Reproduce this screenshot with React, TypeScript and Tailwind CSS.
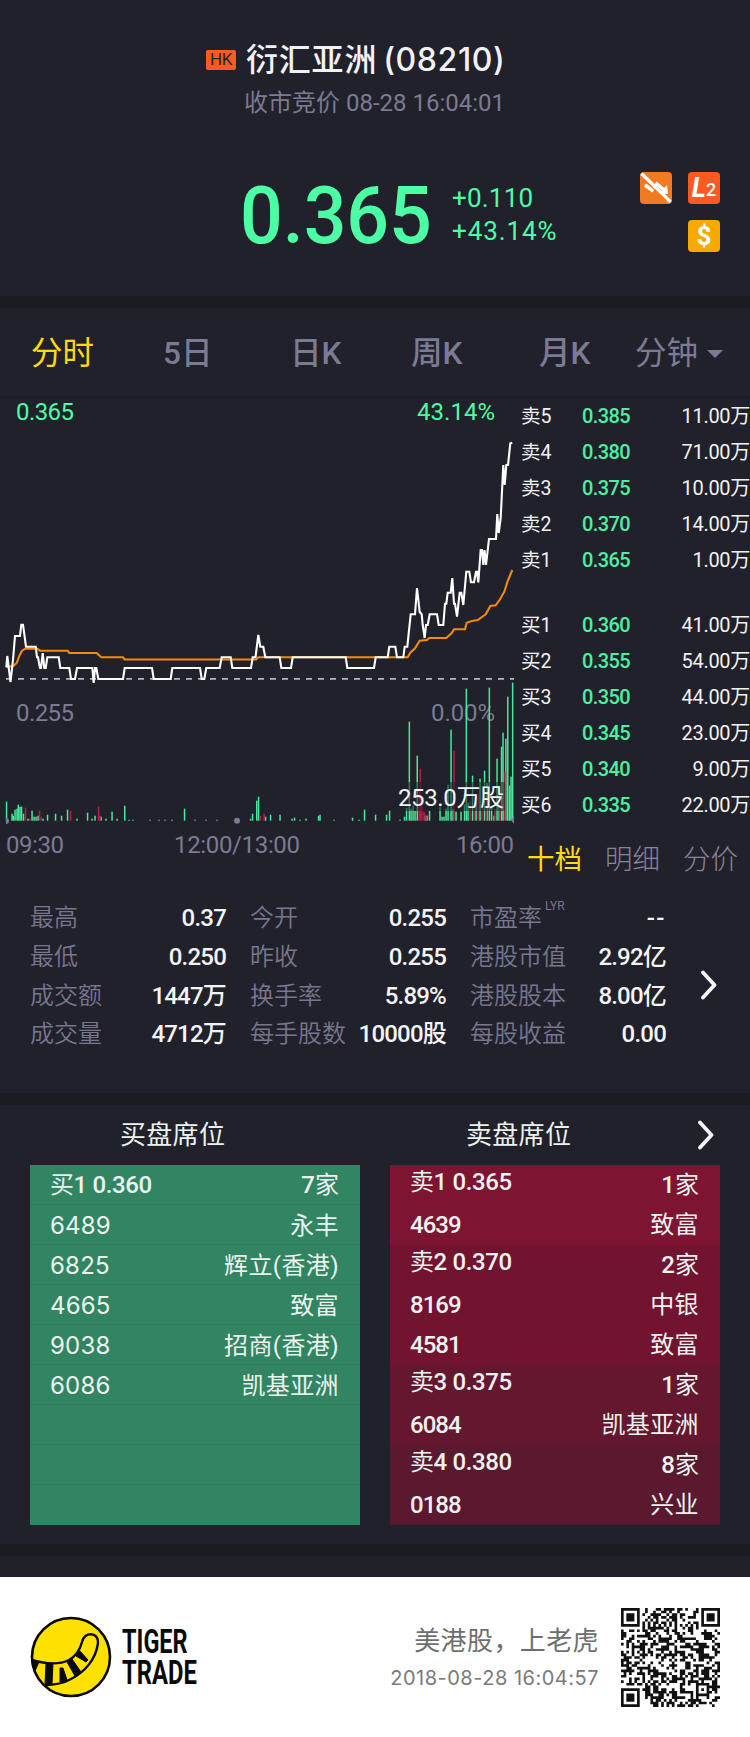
import { clsx } from "clsx";

const PERIODS = [
  { label: "分时", width: "w-[132px]", active: true },
  { label: "5日", width: "w-[127px]" },
  { label: "日K", width: "w-[121px]" },
  { label: "周K", width: "w-[128px]" },
  { label: "月K", width: "w-[96px]" },
];

const ASKS = [
  ["卖5", "0.385", "11.00万"],
  ["卖4", "0.380", "71.00万"],
  ["卖3", "0.375", "10.00万"],
  ["卖2", "0.370", "14.00万"],
  ["卖1", "0.365", "1.00万"],
];

const BIDS = [
  ["买1", "0.360", "41.00万"],
  ["买2", "0.355", "54.00万"],
  ["买3", "0.350", "44.00万"],
  ["买4", "0.345", "23.00万"],
  ["买5", "0.340", "9.00万"],
  ["买6", "0.335", "22.00万"],
];

const STATS = [
  [["最高", "0.37"], ["最低", "0.250"], ["成交额", "1447万"], ["成交量", "4712万"]],
  [["今开", "0.255"], ["昨收", "0.255"], ["换手率", "5.89%"], ["每手股数", "10000股"]],
  [["市盈率", "--"], ["港股市值", "2.92亿"], ["港股股本", "8.00亿"], ["每股收益", "0.00"]],
];

const BUY_SEATS = [
  ["6489", "永丰"],
  ["6825", "辉立(香港)"],
  ["4665", "致富"],
  ["9038", "招商(香港)"],
  ["6086", "凯基亚洲"],
  ["", ""],
  ["", ""],
  ["", ""],
];

const SELL_SEATS = [
  { name: "卖1 0.365", count: "1家", bg: "bg-[#7d1431]", brokers: [["4639", "致富"]] },
  { name: "卖2 0.370", count: "2家", bg: "bg-[#72142f]", brokers: [["8169", "中银"], ["4581", "致富"]] },
  { name: "卖3 0.375", count: "1家", bg: "bg-[#661730]", brokers: [["6084", "凯基亚洲"]] },
  { name: "卖4 0.380", count: "8家", bg: "bg-[#5a192f]", brokers: [["0188", "兴业"]] },
];

const PRICE_LINE =
  "6.3,667.3 7.3,656 10.5,682 13,660 15,636 20,636 21.3,624.7 23,624.7 26,646.7 35.7,646.7 37,657.3 38,657.3 40,668 41,668 42.7,653 44.3,668 45.7,668 47.3,657.3 58.7,657.3 60.3,668 69.3,668 71,679 75,679 77,668 92.3,668 93.7,683 95,668 96.3,668 98.3,679 123,679 124.7,668 152,668 153.7,679 170.7,679 172.3,668 200,668 201.7,679 204.3,679 206.3,668 219.7,668 221.7,657.3 230.7,657.3 232.3,668 251,668 252.7,657.3 255.5,657.3 258.3,635 260.3,646.7 263.3,646.7 265.3,657.3 279.7,657.3 281.3,668 291,668 292.7,657.3 345.7,657.3 347.3,668 374,668 375.7,657.3 387.7,657.3 389.3,646.7 395.3,646.7 397,657.3 403.3,657.3 404.7,646.7 407.3,646.7 410.7,614.3 415,614.3 417,588 419.7,612 421.7,614.3 422.7,625 424.7,638 426,625 427.7,625 429.7,614.3 437,614.3 438.7,625 443.3,625 445,603.7 446.3,603.7 447.7,592.7 450.7,592.7 452.3,578 454,603.7 455,603.7 457,616.7 459.7,592.7 461.3,592.7 463.3,605 466.3,571.7 469.3,571.7 471,582.3 474,582.3 476,571.7 477,571.7 478.3,582.3 480.7,550 482,550 483.3,565 484.5,550 486,565 489,539 496,539 497.3,514 498.7,533 500.7,518 503.3,465 504.7,485 506.3,465 508,465 510.3,443.3 512.3,442.7";

const AVERAGE_LINE =
  "6.3,667 13.3,666 16.7,663 19.3,656 22,650.7 25.3,648.7 37.3,648.7 40,650.7 67.7,650.7 69.3,653 96.7,653 101.3,657.3 123,657.3 124.7,659.5 256,659.5 258.3,657.3 407.7,657.3 410.3,652.7 415,648.3 419.7,640.7 427,640 429.3,638 446.3,638 451.7,633 454,629.3 465,629.3 466.7,622.7 471.7,621 477.7,620 485.7,614.3 490.3,606 495.7,605.3 500,599.3 504.3,591.7 507.7,581 512.3,570";

// [x, height] of every minute's turnover
const UP_BARS = [
  [6.5, 19], [12, 7], [13.3, 5], [15, 11], [17, 12], [18.3, 16], [20, 14], [21.5, 14], [23.5, 7], [28, 2], [32, 10], [34, 4],
  [36, 4], [38, 5], [43, 2], [47.5, 6], [55.5, 7], [61.5, 5], [67.5, 11], [77, 2], [87.5, 8], [92, 2], [95, 5], [101, 4],
  [106, 2], [112, 9], [117, 2], [124.7, 15], [129, 1], [133, 1], [150, 1], [159, 1], [165, 1], [172, 1], [184.5, 12], [195, 1],
  [206, 1], [217, 1], [250.5, 2], [252.5, 7], [256.7, 20], [258.5, 24], [265.5, 4], [270.5, 6], [280, 6], [292, 2], [294.5, 3],
  [300, 1], [306, 2], [318.5, 5], [320, 6], [334, 1], [352.5, 3], [359, 1], [364.5, 11], [375.5, 6], [386.5, 6], [389.5, 10],
  [400, 1], [404.5, 4], [406.5, 13], [409.3, 99], [411, 12], [413, 15], [415, 10], [417.2, 65], [425, 5], [427, 5], [429.5, 10],
  [440, 14], [442, 4], [444, 4], [446, 12], [448, 36], [451, 91], [453, 12], [456, 9], [461, 9], [464.5, 16], [466.3, 132],
  [468, 18], [472.5, 45], [476, 25], [480, 42], [484.5, 50], [487, 38], [489.3, 133], [491.5, 14], [494, 5], [497, 62],
  [499, 35], [501.5, 74], [503, 88], [505.8, 82], [507.7, 124], [509.5, 35], [511, 44], [512.6, 138],
];

const DOWN_BARS = [
  [25.5, 13], [30, 2], [39.5, 10], [41, 4], [70.5, 10], [98.5, 14], [99.8, 5], [260.5, 5], [264, 7], [419, 30], [420.3, 52],
  [422, 14], [424, 9], [426, 6], [454, 70], [470, 20], [474, 11], [478, 25], [482, 34], [486, 20], [495, 12], [500, 26], [504.8, 49],
];

const QR_SIZE = 37;

function isFinder(x: number, y: number) {
  const corners = [[0, 0], [QR_SIZE - 7, 0], [0, QR_SIZE - 7]];
  for (const [cx, cy] of corners) {
    const dx = x - cx;
    const dy = y - cy;
    if (dx >= -1 && dx <= 7 && dy >= -1 && dy <= 7) {
      const ring = Math.max(Math.abs(dx - 3), Math.abs(dy - 3));
      return ring === 3 || ring <= 1;
    }
  }
  return null;
}

function isDark(x: number, y: number) {
  const finder = isFinder(x, y);
  if (finder !== null) return finder;
  const ring = Math.max(Math.abs(x - 30), Math.abs(y - 30));
  if (ring <= 2) return ring !== 1;
  if (x === 6 || y === 6) return (x + y) % 2 === 0;
  let h = (x * 374761393 + y * 668265263) | 0;
  h = Math.imul(h ^ (h >>> 13), 1274126177);
  return ((h ^ (h >>> 16)) & 255) < 130;
}

function QrCode() {
  let d = "";
  for (let y = 0; y < QR_SIZE; y++) {
    for (let x = 0; x < QR_SIZE; x++) {
      if (isDark(x, y)) d += `M${x} ${y}h1v1h-1z`;
    }
  }
  return (
    <svg viewBox="0 0 37 37" className="h-[99px] w-[99px]">
      <path d={d} fill="#111" />
    </svg>
  );
}

function Chevron({ className }: { className?: string }) {
  return (
    <svg viewBox="0 0 18 30" className={clsx("h-[30px] w-[18px]", className)} fill="none">
      <path d="M3 2.5 14.5 15 3 27.5" stroke="#f4f4f6" strokeWidth="3.8" strokeLinecap="round" strokeLinejoin="round" />
    </svg>
  );
}

function TigerLogo() {
  return (
    <div className="flex h-[82px] w-[170px] items-center">
      <svg viewBox="0 0 82 82" className="h-[82px] w-[82px] shrink-0">
        <circle cx="41" cy="41" r="39" fill="#ffe100" stroke="#0a0a0a" strokeWidth="2.6" />
        <path
          d="M2 44C19 49 31 48 39 44C46 40 50 34 52 26C54 15 69 16 68 27C66 43 55 56 41 63C34 67 26 69 15 69"
          fill="none"
          stroke="#0a0a0a"
          strokeWidth="2.4"
        />
        <path
          d="M2 44 9 46 5 55C3 52 2 48 2 44zM16 47 23 47 22 68 15 68zM30 52 33 52 37 64 30 66zM37 46 42 43 51 56 45 60zM46 40 50 35 58 44 56 46z"
          fill="#0a0a0a"
          stroke="#0a0a0a"
          strokeLinejoin="round"
        />
      </svg>
      <div className="ml-[10px] w-[78px] text-[33.5px] leading-[31px] font-bold text-[#0a0a0a]">
        <div className="w-[95px] origin-left scale-x-[0.7]">TIGER</div>
        <div className="w-[110px] origin-left scale-x-[0.71]">TRADE</div>
      </div>
    </div>
  );
}

function Header() {
  return (
    <header className="flex h-[296px] flex-col">
      <div className="flex h-[80px] items-end pl-[206px]">
        <span className="mb-[10px] flex h-5 w-[30px] items-center justify-center rounded-[2px] bg-[#fc5a20] text-[17px] tracking-[-0.5px] text-[#22222b]">
          HK
        </span>
        <h1 className="ml-[10px] flex h-10 items-center whitespace-nowrap font-['Inter','Noto_Sans_CJK_SC',sans-serif] text-[32px] leading-10 font-medium text-[#f2f2f4]">
          <span className="tracking-[0.8px]">衍汇亚洲</span>
          <span className="ml-[6px] tracking-[0.6px]">(08210)</span>
        </h1>
      </div>
      <div className="pt-px pl-[244px] text-[24px] leading-[44px] whitespace-nowrap text-[#7b7b94]">
        收市竞价 <span>08-28 16:04:01</span>
      </div>
      <div className="mt-[41px] flex">
        <div className="flex w-[452px] pl-[240px]">
          <span className="origin-left scale-x-[0.94] text-[80px] leading-[100px] font-medium text-[#4cffa5]">0.365</span>
        </div>
        <div className="mt-[16px] w-[188px] text-[26px] leading-[33px] text-[#4cffa5]">
          <div className="tracking-[0.2px]">+0.110</div>
          <div className="tracking-[0.9px]">+43.14%</div>
        </div>
        <div className="mt-[6px] grid h-20 w-20 grid-cols-2 gap-4">
          <svg viewBox="0 0 32 32" className="h-8 w-8">
            <rect width="32" height="32" rx="4" fill="#f27a22" />
            <path d="M5 13 12 18 17 12 24 18" fill="none" stroke="#fff" strokeWidth="3.6" />
            <path d="M19 22 28 22 27 13z" fill="#fff" />
            <path d="M1.5 1.5 30.5 30" stroke="#fff" strokeWidth="3.4" />
            <path d="M4 7.5 26 28.5" stroke="#f27a22" strokeWidth="1.2" />
          </svg>
          <div className="flex h-8 w-8 items-center justify-center rounded-[4px] bg-[#fc5a20] text-white">
            <span className="text-[27px] leading-8 font-bold italic">L</span>
            <span className="mt-1 text-[18px] leading-7 font-medium">2</span>
          </div>
          <div className="col-start-2 flex h-8 w-8 items-center justify-center rounded-[4px] bg-[#f8a900] text-[26px] leading-8 font-bold text-white">
            $
          </div>
        </div>
      </div>
    </header>
  );
}

function PeriodTabs() {
  return (
    <nav className="flex h-[88px] items-center pt-[3px] pl-[31px] text-[31.5px] leading-10 whitespace-nowrap text-[#7b7b94]">
      {PERIODS.map((p) => (
        <span key={p.label} className={clsx(p.width, p.active ? "text-[#ffd912]" : "font-medium")}>
          {p.label}
        </span>
      ))}
      <span>分钟</span>
      <svg viewBox="0 0 16 8" className="ml-[9px] h-2 w-4">
        <path d="M0 0h16L8 8z" fill="#7b7b94" />
      </svg>
    </nav>
  );
}

function TrendChart() {
  return (
    <svg viewBox="0 398 516 492" className="h-[492px] w-[516px] shrink-0" fontSize="24" fill="#7b7b94">
      <g fill="#4cffa5">
        <text x="16" y="420" textLength="58">0.365</text>
        <text x="417" y="420" textLength="78">43.14%</text>
      </g>
      <text x="16" y="721" textLength="58">0.255</text>
      <text x="431" y="721" textLength="64">0.00%</text>
      <path d="M6 678.8H514" stroke="#b4b4bc" strokeWidth="1.8" strokeDasharray="6 6" />
      {UP_BARS.map(([x, h]) => (
        <rect key={x} x={x - 0.7} y={820.7 - h} width="1.5" height={h} fill="#46ea9b" />
      ))}
      {DOWN_BARS.map(([x, h]) => (
        <rect key={x} x={x - 0.7} y={820.7 - h} width="1.5" height={h} fill="#b02047" />
      ))}
      <polyline points={AVERAGE_LINE} fill="none" stroke="#f58a0b" strokeWidth="2.1" />
      <polyline points={PRICE_LINE} fill="none" stroke="#fff" strokeWidth="2.1" />
      <path d="M6 818v6a3 3 0 0 0 0-6zM514 816v8l-3-4z" />
      <circle cx="237" cy="820.7" r="3" />
      <rect x="397" y="782" width="108" height="29" fill="#21212b" fillOpacity="0.55" />
      <text x="398" y="806" textLength="106" fill="#f4f4f6">253.0万股</text>
      <text x="6" y="853" textLength="58">09:30</text>
      <text x="174" y="853" textLength="126">12:00/13:00</text>
      <text x="456" y="853" textLength="58">16:00</text>
    </svg>
  );
}

function QuoteRow({ row }: { row: string[] }) {
  const [label, price, volume] = row;
  return (
    <div className="flex h-[35.9px] items-center text-[20px] leading-[35.9px] whitespace-nowrap text-[#f2f2f4]">
      <span className="w-[61px] text-[19.5px]">{label}</span>
      <span className="w-[70px] font-medium tracking-[-0.6px] text-[#4cf0a0]">{price}</span>
      <span className="flex-1 text-right tracking-[-0.3px]">{volume}</span>
    </div>
  );
}

function OrderBook() {
  return (
    <div className="flex flex-1 flex-col pt-px pl-[5px]">
      {ASKS.map((row) => (
        <QuoteRow key={row[0]} row={row} />
      ))}
      <div className="h-[30px]" />
      {BIDS.map((row) => (
        <QuoteRow key={row[0]} row={row} />
      ))}
      <div className="mt-[16px] flex gap-[23px] pl-[6px] text-[27.5px] leading-[40px] font-light whitespace-nowrap text-[#85859d]">
        <span className="font-normal text-[#ffd912]">十档</span>
        <span>明细</span>
        <span>分价</span>
      </div>
    </div>
  );
}

function Stats() {
  return (
    <section className="flex h-[203px] items-start pt-[9px] pl-[30px]">
      <div className="flex gap-[24px]">
        {STATS.map((column, i) => (
          <dl key={i} className="w-[196px]">
            {column.map(([label, value]) => (
              <div key={label} className="flex h-[38.7px] items-center justify-between text-[24px] leading-[38px] whitespace-nowrap">
                <dt className="flex font-[350] text-[#77778f]">
                  {label}
                  {label === "市盈率" && <sup className="top-0 ml-[3px] h-4 self-start text-[12px] leading-[14px] font-normal">LYR</sup>}
                </dt>
                <dd className={clsx("font-medium text-[#f4f4f6]", value === "--" ? "tracking-[1.5px]" : "tracking-[-0.8px]")}>{value}</dd>
              </div>
            ))}
          </dl>
        ))}
      </div>
      <Chevron className="mt-[71px] ml-[34px]" />
    </section>
  );
}

function Seats() {
  return (
    <section className="h-[439px] text-[24px] text-[#ecf3ef]">
      <div className="flex h-[60px] items-center whitespace-nowrap">
        <h2 className="w-[346px] pl-[120px] text-[26px] leading-10 tracking-[0.3px]">买盘席位</h2>
        <h2 className="flex-1 pl-[120px] text-[26px] leading-10 tracking-[0.3px]">卖盘席位</h2>
        <Chevron className="mr-[35px]" />
      </div>
      <div className="flex gap-[30px] px-[30px]">
        <div className="h-[360px] w-[330px] bg-[#328562] whitespace-nowrap">
          <div className="flex h-10 items-center justify-between border-b border-[#2e7a5b] pt-px pr-[21px] pl-5 leading-10">
            <span className="tracking-[-0.4px]">
              买<span className="font-medium">1 0.360</span>
            </span>
            <span><span className="font-medium">7</span>家</span>
          </div>
          {BUY_SEATS.map(([code, broker], i) => (
            <div key={i} className="flex h-10 items-center justify-between border-b border-[#2e7a5b] pt-0.5 pr-[21px] pl-5 leading-10 last:border-0">
              <span className="font-['Inter',sans-serif] tracking-[0.2px]">{code}</span>
              <span className="tracking-[0.4px]">{broker}</span>
            </div>
          ))}
        </div>
        <div className="h-[360px] w-[330px] whitespace-nowrap">
          {SELL_SEATS.map((seat) => (
            <div key={seat.name} className={clsx("pr-[21px] pl-5 leading-[41px]", seat.bg)}>
              <div className="flex h-10 justify-between">
                <span className="-mt-[3px] tracking-[-0.4px]">
                  {seat.name.slice(0, 1)}
                  <span className="font-medium">{seat.name.slice(1)}</span>
                </span>
                <span>
                  <span className="font-medium">{seat.count.slice(0, 1)}</span>
                  {seat.count.slice(1)}
                </span>
              </div>
              {seat.brokers.map(([code, broker]) => (
                <div key={code} className="flex h-10 justify-between">
                  <span className="font-medium tracking-[-1px]">{code}</span>
                  <span className="tracking-[0.4px]">{broker}</span>
                </div>
              ))}
            </div>
          ))}
        </div>
      </div>
    </section>
  );
}

function ShareFooter() {
  return (
    <footer className="flex h-[160px] items-center bg-white pl-[30px]">
      <TigerLogo />
      <div className="w-[399px] pt-1 text-right whitespace-nowrap text-[#6e6e6e]">
        <div className="text-[26px] leading-[38px] tracking-[0.4px]">美港股，上老虎</div>
        <div className="font-['Inter',sans-serif] text-[20px] leading-[36px] tracking-[0.5px] text-[#7a7a7a]">2018-08-28 16:04:57</div>
      </div>
      <div className="ml-[22px]">
        <QrCode />
      </div>
    </footer>
  );
}

export default function App() {
  return (
    <main className="h-[1737px] w-[750px] overflow-hidden bg-[#21212b] font-['Roboto','Noto_Sans_CJK_SC',sans-serif]">
      <Header />
      <div className="h-3 bg-[#1b1b22]" />
      <PeriodTabs />
      <div className="h-[2px] bg-[#1d1d25]" />
      <section className="flex h-[492px]">
        <TrendChart />
        <OrderBook />
      </section>
      <Stats />
      <div className="h-3 bg-[#1b1b22]" />
      <Seats />
      <div className="h-3 bg-[#1b1b22]" />
      <div className="h-[21px]" />
      <ShareFooter />
    </main>
  );
}
